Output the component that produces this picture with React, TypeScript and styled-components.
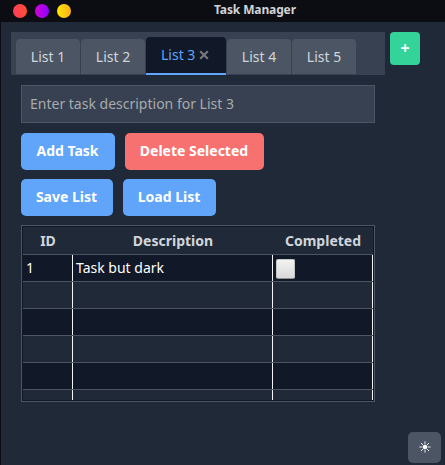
import React from "react";
import styled, { createGlobalStyle } from "styled-components";

const Global = createGlobalStyle`
  * { box-sizing: border-box; }
  html, body { margin: 0; padding: 0; background: #1f2937; overflow: hidden; }
`;

const Window = styled.div`
  position: relative;
  display: flex;
  flex-direction: column;
  width: 445px;
  height: 465px;
  background: #1f2937;
  font-family: "Noto Sans", sans-serif;
  font-size: 14px;
  color: #fff;
  white-space: nowrap;
`;

const TitleBar = styled.header`
  display: grid;
  grid-template-columns: 65px 1fr;
  align-items: center;
  height: 22px;
  flex: none;
  padding-left: 13px;
  background: #0c0d12;
`;

const Controls = styled.div`
  display: flex;
  gap: 8px;
`;

const Dot = styled.span<{ $from: string; $to: string }>`
  width: 14px;
  height: 14px;
  border-radius: 50%;
  background: linear-gradient(to right, ${(p) => p.$from}, ${(p) => p.$to});
`;

const Title = styled.h1`
  margin: 0 0 3px;
  padding-left: 136px;
  font-size: 12px;
  letter-spacing: -0.12px;
  line-height: 16px;
  font-weight: 700;
  color: #d1d3d6;
`;

const Body = styled.main`
  flex: 1;
  padding: 10px 10px 0;
  border-left: 1px solid #0c0d12;
`;

const TopRow = styled.div`
  display: flex;
  align-items: flex-start;
  gap: 5px;
`;

const TabStrip = styled.nav`
  display: flex;
  align-items: flex-end;
  gap: 1px;
  width: 374px;
  height: 43px;
  padding: 0 5px;
  background: #374151;
`;

const Tab = styled.button<{ $active?: boolean }>`
  display: flex;
  align-items: center;
  justify-content: ${(p) => (p.$active ? "flex-start" : "center")};
  gap: 4px;
  width: ${(p) => (p.$active ? 80 : 64)}px;
  height: ${(p) => (p.$active ? 38 : 35)}px;
  margin-bottom: ${(p) => (p.$active ? 0 : 1)}px;
  padding: ${(p) => (p.$active ? "0 0 2px 15px" : "0")};
  border: 0;
  border-bottom: ${(p) => (p.$active ? "2px solid #60a5fa" : "0")};
  border-radius: 4px 4px 0 0;
  background: ${(p) => (p.$active ? "#111827" : "#4b5563")};
  color: ${(p) => (p.$active ? "#60a5fa" : "#d1d5db")};
  font: inherit;
`;

const CloseIcon = styled.svg`
  width: 10px;
  height: 10px;
  margin-top: 2px;
`;

const AddTab = styled.button`
  width: 30px;
  height: 33px;
  padding: 0 0 1px;
  border: 0;
  border-radius: 4px;
  background: #34d399;
  color: #fff;
  font: inherit;
  font-size: 16px;
  font-weight: 700;
`;

const Page = styled.section`
  width: 354px;
  margin: 10px 0 0 10px;
`;

const TaskInput = styled.input`
  display: block;
  width: 100%;
  height: 38px;
  padding: 0 8px 1px;
  border: 1px solid #4b5563;
  border-radius: 0;
  background: #374151;
  color: #fff;
  font: inherit;
  outline: 0;
  &::placeholder { color: #a8abad; opacity: 1; }
`;

const Actions = styled.div<{ $top: number }>`
  display: flex;
  gap: 10px;
  margin-top: ${(p) => p.$top}px;
`;

const Action = styled.button<{ $width: number; $danger?: boolean }>`
  width: ${(p) => p.$width}px;
  height: 37px;
  padding: 0 1px 2px 0;
  border: 0;
  border-radius: 5px;
  background: ${(p) => (p.$danger ? "#f87171" : "#60a5fa")};
  color: #fff;
  font: inherit;
  font-weight: 700;
`;

const Table = styled.div`
  height: 177px;
  margin-top: 9px;
  border: 1px solid #4b5563;
  padding: 1px;
  background: #111827;
`;

const Clip = styled.div`
  height: 173px;
  overflow: hidden;
`;

const columns = "50px 200px 100px";

const HeaderRow = styled.div`
  display: grid;
  grid-template-columns: ${columns};
  height: 28px;
  border-bottom: 1px solid #4b5563;
  background: #1f2937;
  color: #d1d5db;
  font-weight: 700;
  line-height: 27px;
  text-align: center;
`;

const Row = styled.div<{ $dark?: boolean }>`
  display: grid;
  grid-template-columns: ${columns};
  height: 27px;
  border-bottom: 1px solid #4b5563;
  background: ${(p) => (p.$dark ? "#111827" : "#1f2937")};
`;

const Cell = styled.div`
  display: flex;
  align-items: center;
  padding: 0 0 1px 3px;
  border-right: 1px solid #f3f4f6;
`;

const Checkbox = styled.span`
  width: 19px;
  height: 20px;
  margin: 3px 0 0;
  border: 1px solid #c4c4c4;
  border-bottom-color: #8f8f8f;
  border-radius: 2px;
  background: linear-gradient(#f2f2f2, #d9d9d9);
`;

const ThemeButton = styled.button`
  position: absolute;
  right: 4px;
  bottom: 2px;
  display: grid;
  place-items: center;
  width: 33px;
  height: 31px;
  padding: 0 0 1px;
  border: 0;
  border-radius: 5px;
  background: #4b5563;
`;

const tabs = ["List 1", "List 2", "List 3", "List 4", "List 5"];

export default function App() {
  return (
    <>
      <Global />
      <Window>
        <TitleBar>
          <Controls>
            <Dot $from="#ff3b5c" $to="#ff5030" />
            <Dot $from="#d400d4" $to="#8f00ff" />
            <Dot $from="#ffe600" $to="#ffb01f" />
          </Controls>
          <Title>Task Manager</Title>
        </TitleBar>
        <Body>
          <TopRow>
            <TabStrip>
              {tabs.map((name) => (
                <Tab key={name} $active={name === "List 3"}>
                  {name}
                  {name === "List 3" && (
                    <CloseIcon viewBox="0 0 10 10">
                      <path d="M1.2 1.2 8.8 8.8M8.8 1.2 1.2 8.8" stroke="#777a7c" strokeWidth="2.1" />
                    </CloseIcon>
                  )}
                </Tab>
              ))}
            </TabStrip>
            <AddTab>+</AddTab>
          </TopRow>
          <Page>
            <TaskInput placeholder="Enter task description for List 3" />
            <Actions $top={10}>
              <Action $width={94}>Add Task</Action>
              <Action $width={139} $danger>Delete Selected</Action>
            </Actions>
            <Actions $top={9}>
              <Action $width={92}>Save List</Action>
              <Action $width={93}>Load List</Action>
            </Actions>
            <Table>
              <Clip>
                <HeaderRow>
                  <span>ID</span>
                  <span>Description</span>
                  <span>Completed</span>
                </HeaderRow>
                <Row $dark>
                  <Cell>1</Cell>
                  <Cell>Task but dark</Cell>
                  <Cell><Checkbox /></Cell>
                </Row>
                {[1, 2, 3, 4, 5].map((n) => (
                  <Row key={n} $dark={n % 2 === 0}>
                    <Cell />
                    <Cell />
                    <Cell />
                  </Row>
                ))}
              </Clip>
            </Table>
          </Page>
        </Body>
        <ThemeButton aria-label="Toggle theme">
          <svg width="12" height="12" viewBox="0 0 12 12">
            <circle cx="6" cy="6" r="2.3" fill="#fff" />
            <path
              d="M6 .3v3M6 8.7v3M.3 6h3M8.7 6h3M2 2l2 2M8 8l2 2M2 10l2-2M8 4l2-2"
              stroke="#e5e7eb"
              strokeWidth="1"
            />
          </svg>
        </ThemeButton>
      </Window>
    </>
  );
}
